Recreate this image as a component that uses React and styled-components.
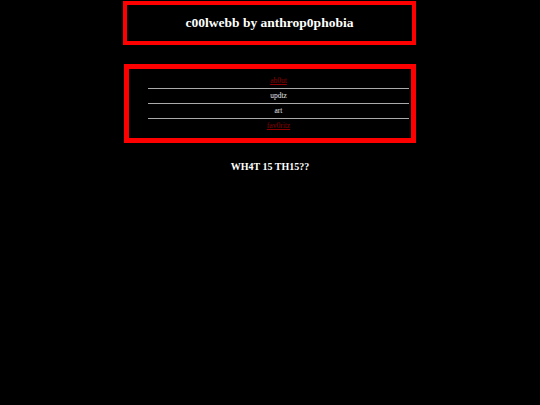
import React from "react";
import styled, { createGlobalStyle } from "styled-components";

const GlobalStyle = createGlobalStyle`
  html, body {
    margin: 0;
    padding: 0;
    background: #000;
  }
  body {
    font-family: "Liberation Serif", "Times New Roman", serif;
    color: #fff;
  }
`;

const navItems = [
  { label: "ab0ut", link: true },
  { label: "updtz", link: false },
  { label: "art", link: false },
  { label: "fav0ritz", link: true },
];

export default function App() {
  return (
    <>
      <GlobalStyle />
      <Page>
        <Header>
          <Title>c00lwebb by anthrop0phobia</Title>
        </Header>
        <NavBox>
          <NavList>
            {navItems.map((item) => (
              <NavItem key={item.label}>
                {item.link ? <NavLink href="#">{item.label}</NavLink> : item.label}
              </NavItem>
            ))}
          </NavList>
        </NavBox>
        <Heading>WH4T 15 TH15??</Heading>
      </Page>
    </>
  );
}

const Page = styled.div`
  width: 540px;
  min-height: 405px;
  padding-top: 1px;
  box-sizing: border-box;
  background: #000;
`;

const Header = styled.div`
  box-sizing: border-box;
  width: 293px;
  height: 44px;
  margin: 0 auto 0 123px;
  border: 4px solid #ff0000;
  display: flex;
  align-items: center;
  justify-content: center;
`;

const Title = styled.h1`
  margin: 0;
  font-size: 13.5px;
  font-weight: bold;
  color: #fff;
`;

const NavBox = styled.div`
  box-sizing: border-box;
  width: 292px;
  height: 79px;
  margin: 19px 0 0 124px;
  border: 5px solid #ff0000;
  padding: 5px 2px 5px 19px;
`;

const NavList = styled.ul`
  list-style: none;
  margin: 0;
  padding: 0;
`;

const NavItem = styled.li`
  height: 14px;
  line-height: 14px;
  font-size: 7.5px;
  text-align: center;
  color: #e6e6e6;
  & + & {
    border-top: 1px solid #aaa;
  }
`;

const NavLink = styled.a`
  color: #8b0000;
  text-decoration: underline;
`;

const Heading = styled.h2`
  margin: 18px 0 0;
  font-size: 10px;
  font-weight: bold;
  text-align: center;
  color: #fff;
`;
